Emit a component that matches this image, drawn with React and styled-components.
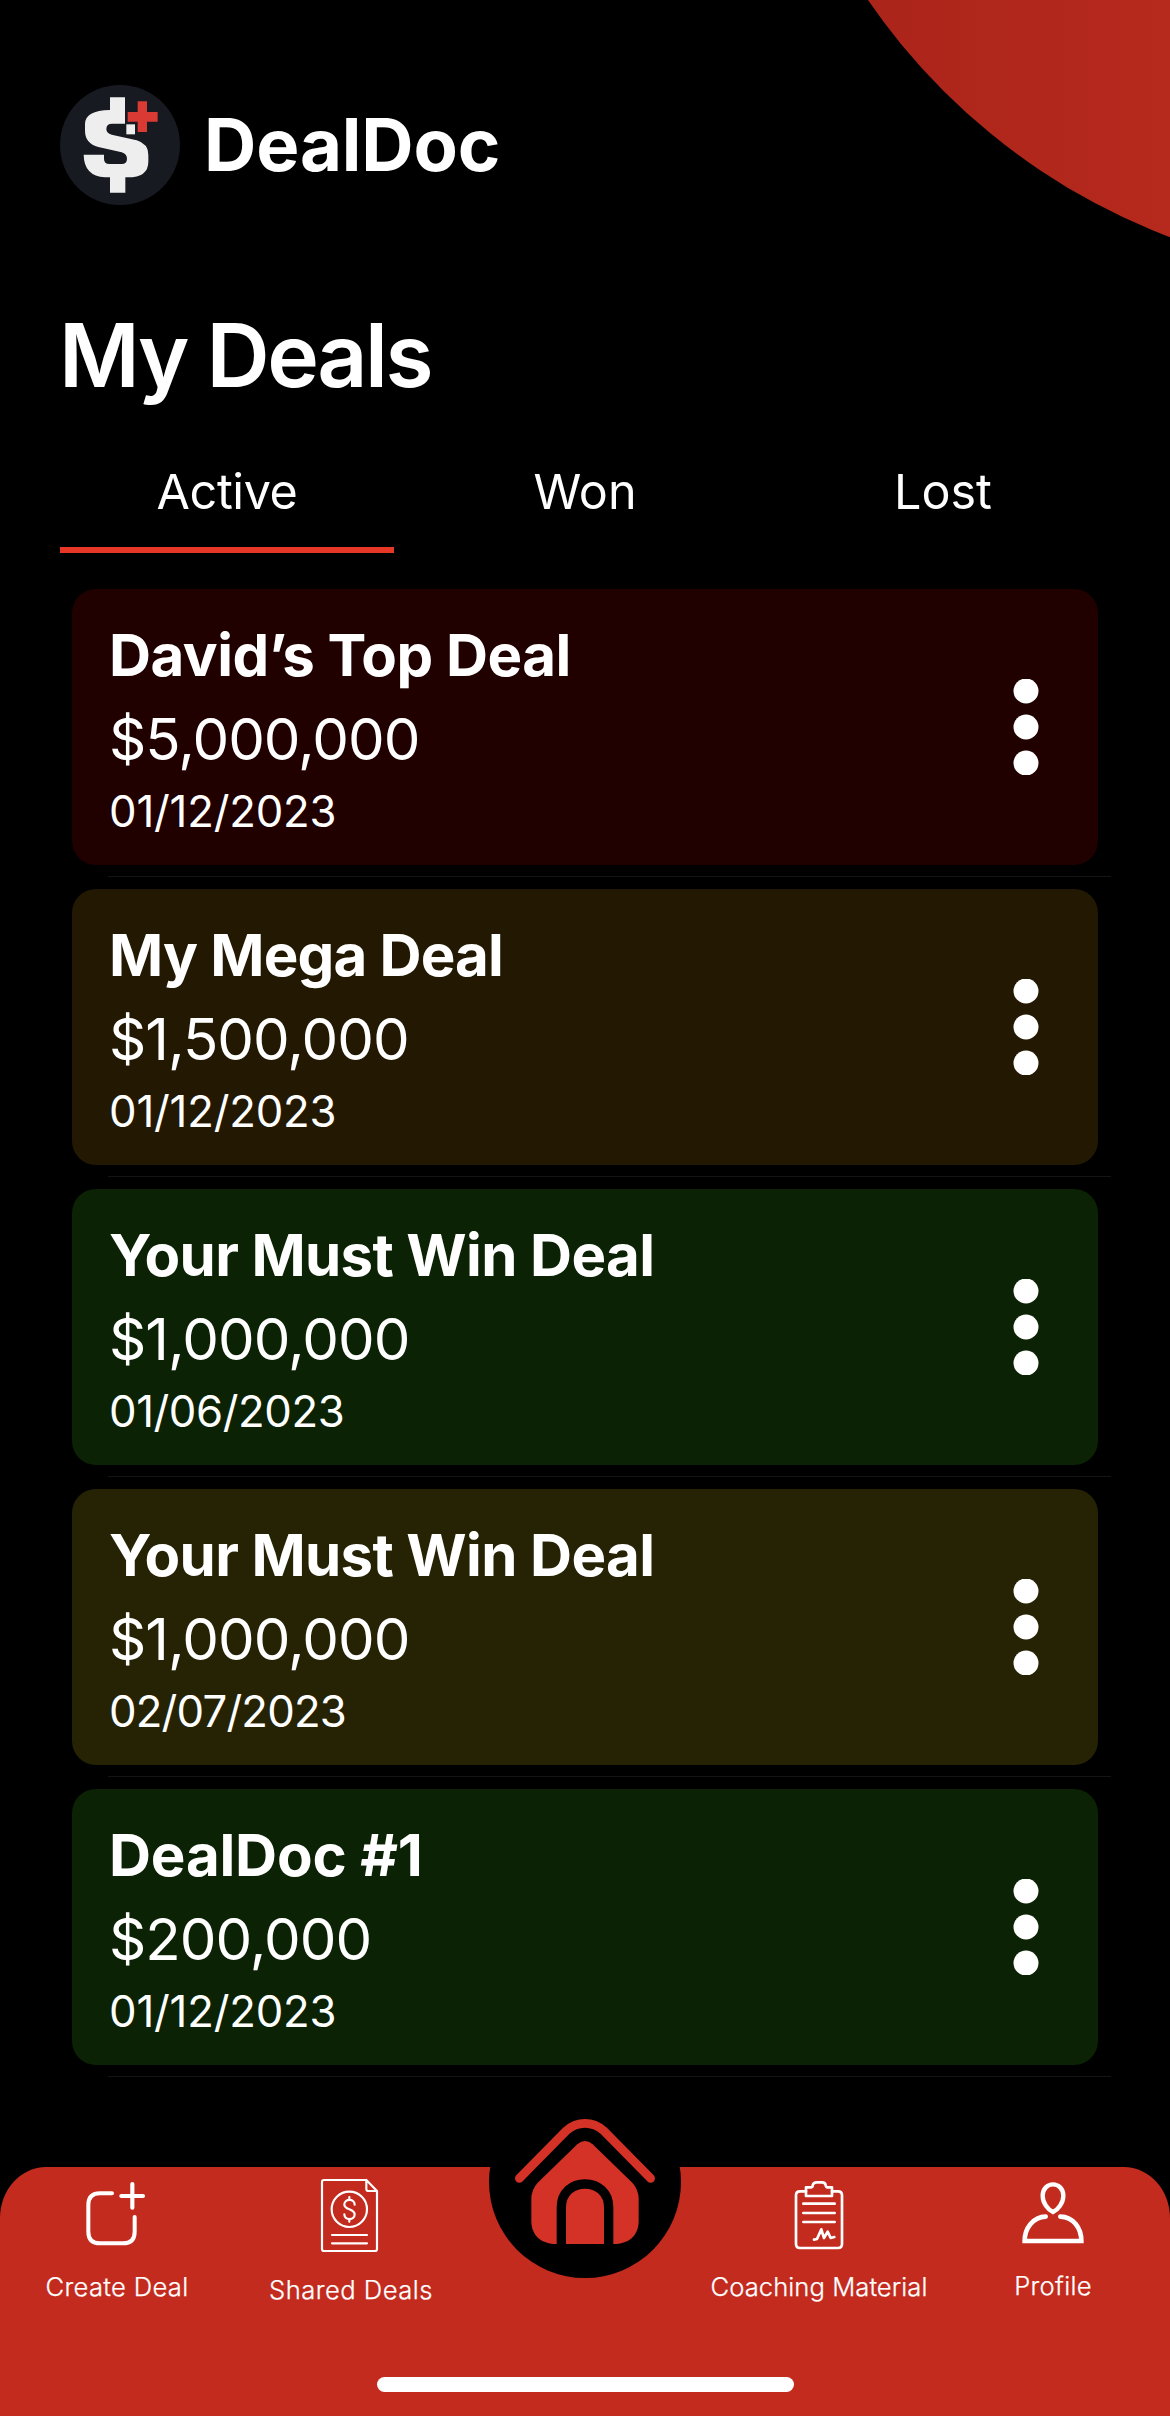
import React from 'react';
import styled, { createGlobalStyle } from 'styled-components';

const GlobalStyle = createGlobalStyle`
  * { box-sizing: border-box; }
  body { margin: 0; background: #000; }
`;

const Screen = styled.main`
  position: relative;
  width: 1170px;
  height: 2416px;
  overflow: hidden;
  display: flex;
  flex-direction: column;
  background: #000;
  color: #fff;
  font-family: Inter, "Liberation Sans", sans-serif;
`;

const CornerDisc = styled.div`
  position: absolute;
  left: 755px;
  top: -1007px;
  width: 1286px;
  height: 1286px;
  border-radius: 50%;
  background: linear-gradient(90deg, #ac251a 10%, #b6291d 32%);
`;

const Header = styled.header`
  display: flex;
  align-items: center;
  gap: 24px;
  padding: 85px 60px 0;
`;

const LogoMark = styled.svg`
  display: block;
  width: 120px;
  height: 120px;
  border-radius: 50%;
`;

const Brand = styled.span`
  font-size: 72.4px;
  line-height: 120px;
  font-weight: 700;
  letter-spacing: -0.1px;
`;

const Heading = styled.h1`
  margin: 97px 0 0;
  padding: 0 59px;
  font-size: 87.5px;
  line-height: 106px;
  font-weight: 600;
  letter-spacing: -2.5px;
`;

const Tabs = styled.nav`
  display: grid;
  grid-template-columns: repeat(3, 334px);
  gap: 24px;
  margin-top: 39px;
  padding: 0 60px;
`;

const Tab = styled.div`
  height: 106px;
  padding-top: 15px;
  text-align: center;
  font-size: 48.5px;
  line-height: 60px;
  letter-spacing: ${(p) => (p.$active ? -0.4 : 0)}px;
  border-bottom: 6px solid ${(p) => (p.$active ? '#e73727' : 'transparent')};
`;

const DealList = styled.ul`
  list-style: none;
  margin: 36px 0 0;
  padding: 0;
`;

const DealItem = styled.li`
  height: 300px;
  padding: 0 59px 0 72px;
`;

const Card = styled.article`
  display: flex;
  justify-content: space-between;
  align-items: center;
  width: 1026px;
  height: 276px;
  padding: 0 59px 0 37px;
  border-radius: 24px;
  background: ${(p) => p.$tone};
`;

const DealInfo = styled.div`
  padding-top: 4px;
`;

const Divider = styled.div`
  height: 1px;
  margin: 11px 0 0 36px;
  background: #141515;
`;

const Title = styled.h2`
  margin: 0;
  font-size: 58.2px;
  line-height: 72px;
  font-weight: 700;
  letter-spacing: ${(p) => p.$track}px;
`;

const Amount = styled.p`
  margin: 12px 0 0;
  font-size: 58.2px;
  line-height: 72px;
  letter-spacing: -1px;
`;

const DealDate = styled.p`
  margin: 10px 0 0;
  font-size: 43.7px;
  line-height: 54px;
  letter-spacing: ${(p) => p.$track}px;
`;

const MenuDots = styled.svg`
  display: block;
  width: 26px;
  height: 96px;
`;

const TabBar = styled.nav`
  position: absolute;
  left: 0;
  top: 2167px;
  width: 1170px;
  height: 249px;
  display: grid;
  grid-template-columns: repeat(5, 234px);
  border-radius: 46px 46px 0 0 / 51px 51px 0 0;
  background: #c42b1f;
`;

const BarItem = styled.div`
  display: flex;
  flex-direction: column;
  align-items: center;
`;

const BarIcon = styled.svg`
  display: block;
  width: 78px;
  height: 90px;
  flex: none;
`;

const BarLabel = styled.span`
  margin-top: ${(p) => p.$top}px;
  font-size: 25.6px;
  line-height: 32px;
  font-weight: 300;
  -webkit-text-stroke: 0.25px #fff;
  white-space: nowrap;
  letter-spacing: ${(p) => p.$track || 0}px;
`;

const HomeButton = styled.div`
  width: 192px;
  height: 192px;
  margin-top: -81px;
  border-radius: 50%;
  background: #000;
`;

const HomeIndicator = styled.div`
  position: absolute;
  left: 377px;
  top: 2377px;
  width: 417px;
  height: 15px;
  border-radius: 8px;
  background: #fff;
`;

const deals = [
  { title: 'David’s Top Deal', amount: '$5,000,000', date: '01/12/2023', tone: '#200100', titleTrack: -0.5, dateTrack: -0.17 },
  { title: 'My Mega Deal', amount: '$1,500,000', date: '01/12/2023', tone: '#231903', titleTrack: -0.8, dateTrack: -0.17 },
  { title: 'Your Must Win Deal', amount: '$1,000,000', date: '01/06/2023', tone: '#0b2204', titleTrack: -0.63, dateTrack: -0.4 },
  { title: 'Your Must Win Deal', amount: '$1,000,000', date: '02/07/2023', tone: '#262305', titleTrack: -0.63, dateTrack: -0.8 },
  { title: 'DealDoc #1', amount: '$200,000', date: '01/12/2023', tone: '#0b2204', titleTrack: -0.17, dateTrack: -0.17 },
];

const Logo = () => (
  <LogoMark viewBox="15 15 360 360">
    <rect x="15" y="15" width="360" height="360" fill="#171a20" />
    <path
      d="M165 52H210V131H172Q154 131 154 147Q154 160 170 164L245 181Q280 191 280 225V245Q280 292 218 292H211V338H165V292H150Q87 288 86 224H147V236Q147 252 163 252H200Q216 252 216 236Q216 222 200 217L130 201Q90 190 90 152V132Q90 92 165 90Z"
      fill="#eee"
    />
    <rect x="214" y="133" width="26" height="30" fill="#eee" />
    <path d="M248 64H276V96H308V125H276V156H248V125H218V96H248Z" fill="#d93a34" />
  </LogoMark>
);

const CreateIcon = () => (
  <BarIcon viewBox="234 261 234 270" fill="none" stroke="#fff" strokeWidth="12" strokeLinecap="round">
    <path d="M336 340H300Q265 340 265 375V455Q265 490 300 490H369Q404 490 404 455V411" />
    <path d="M397 312V383M364 348H429" strokeWidth="12.500" />
  </BarIcon>
);

const SharedIcon = () => (
  <BarIcon viewBox="936 261 234 270" fill="none" stroke="#fff" strokeWidth="6.500" strokeLinecap="round" strokeLinejoin="round">
    <path d="M1099 300H972Q966 300 966 306V507Q966 513 972 513H1125Q1131 513 1131 507V333L1099 300V327Q1099 333 1105 333H1131" />
    <circle cx="1048" cy="388" r="53" />
    <path d="M996 465H1101M996 490H1101M1048 351V360M1048 417V425" />
    <path d="M1064 374C1064 355 1033 355 1033 374C1033 390 1064 386 1064 403C1064 422 1033 422 1033 403" />
  </BarIcon>
);

const CoachingIcon = () => (
  <BarIcon viewBox="300 201 234 270" fill="none" stroke="#fff" strokeWidth="8" strokeLinecap="round" strokeLinejoin="round">
    <path d="M378 274H360Q348 274 348 286V432Q348 444 360 444H474Q486 444 486 432V286Q486 274 474 274H456" />
    <path d="M378 288V262H394Q398 262 398 256Q400 247 410 247H426Q436 247 437 256Q438 262 442 262H456V288Z" />
    <path d="M370 311H464M370 339H464M370 366H464" />
    <path d="M402 419L411 417L424 388L432 414L443 395L452 414L463 411" />
  </BarIcon>
);

const ProfileIcon = () => (
  <BarIcon viewBox="1002 201 234 270" fill="none" stroke="#fff" strokeWidth="14" strokeLinecap="round">
    <path d="M1119 253C1103 253 1088 266 1088 287C1088 309 1104 329 1119 336C1134 329 1150 309 1150 287C1150 266 1135 253 1119 253Z" strokeWidth="13" />
    <path d="M1097 350C1060 351 1034 384 1034 423H1204C1204 384 1180 351 1141 350" />
  </BarIcon>
);

const HomeIcon = () => (
  <svg width="192" height="192" viewBox="267 18 576 576" fill="none">
    <path d="M358 295L499 152Q524 130 555 130T611 152L752 295" stroke="#d43226" strokeWidth="26" strokeLinecap="round" />
    <path d="M532 193Q555 173 578 193L697 308Q716 329 716 357V426C714 470 684 492 641 492H469C426 492 396 470 394 426V357Q394 329 413 308Z" fill="#d43226" />
    <path d="M484 492V382C484 337 517 312 555 312S626 337 626 382V492" stroke="#000" strokeWidth="28" />
  </svg>
);

export default function App() {
  return (
    <Screen>
      <GlobalStyle />
      <CornerDisc />
      <Header>
        <Logo />
        <Brand>DealDoc</Brand>
      </Header>
      <Heading>My Deals</Heading>
      <Tabs>
        <Tab $active>Active</Tab>
        <Tab>Won</Tab>
        <Tab>Lost</Tab>
      </Tabs>
      <DealList>
        {deals.map((d, i) => (
          <DealItem key={i}>
            <Card $tone={d.tone}>
              <DealInfo>
                <Title $track={d.titleTrack}>{d.title}</Title>
                <Amount>{d.amount}</Amount>
                <DealDate $track={d.dateTrack}>{d.date}</DealDate>
              </DealInfo>
              <MenuDots viewBox="0 0 26 96" fill="#fff">
                <circle cx="13" cy="12" r="12.500" />
                <circle cx="13" cy="48" r="12.500" />
                <circle cx="13" cy="84" r="12.500" />
              </MenuDots>
            </Card>
            <Divider />
          </DealItem>
        ))}
      </DealList>
      <TabBar>
        <BarItem><CreateIcon /><BarLabel $top={14} $track={0.3}>Create Deal</BarLabel></BarItem>
        <BarItem><SharedIcon /><BarLabel $top={17} $track={0.48}>Shared Deals</BarLabel></BarItem>
        <BarItem><HomeButton><HomeIcon /></HomeButton></BarItem>
        <BarItem><CoachingIcon /><BarLabel $top={14} $track={0.05}>Coaching Material</BarLabel></BarItem>
        <BarItem><ProfileIcon /><BarLabel $top={13} $track={0.3}>Profile</BarLabel></BarItem>
      </TabBar>
      <HomeIndicator />
    </Screen>
  );
}
